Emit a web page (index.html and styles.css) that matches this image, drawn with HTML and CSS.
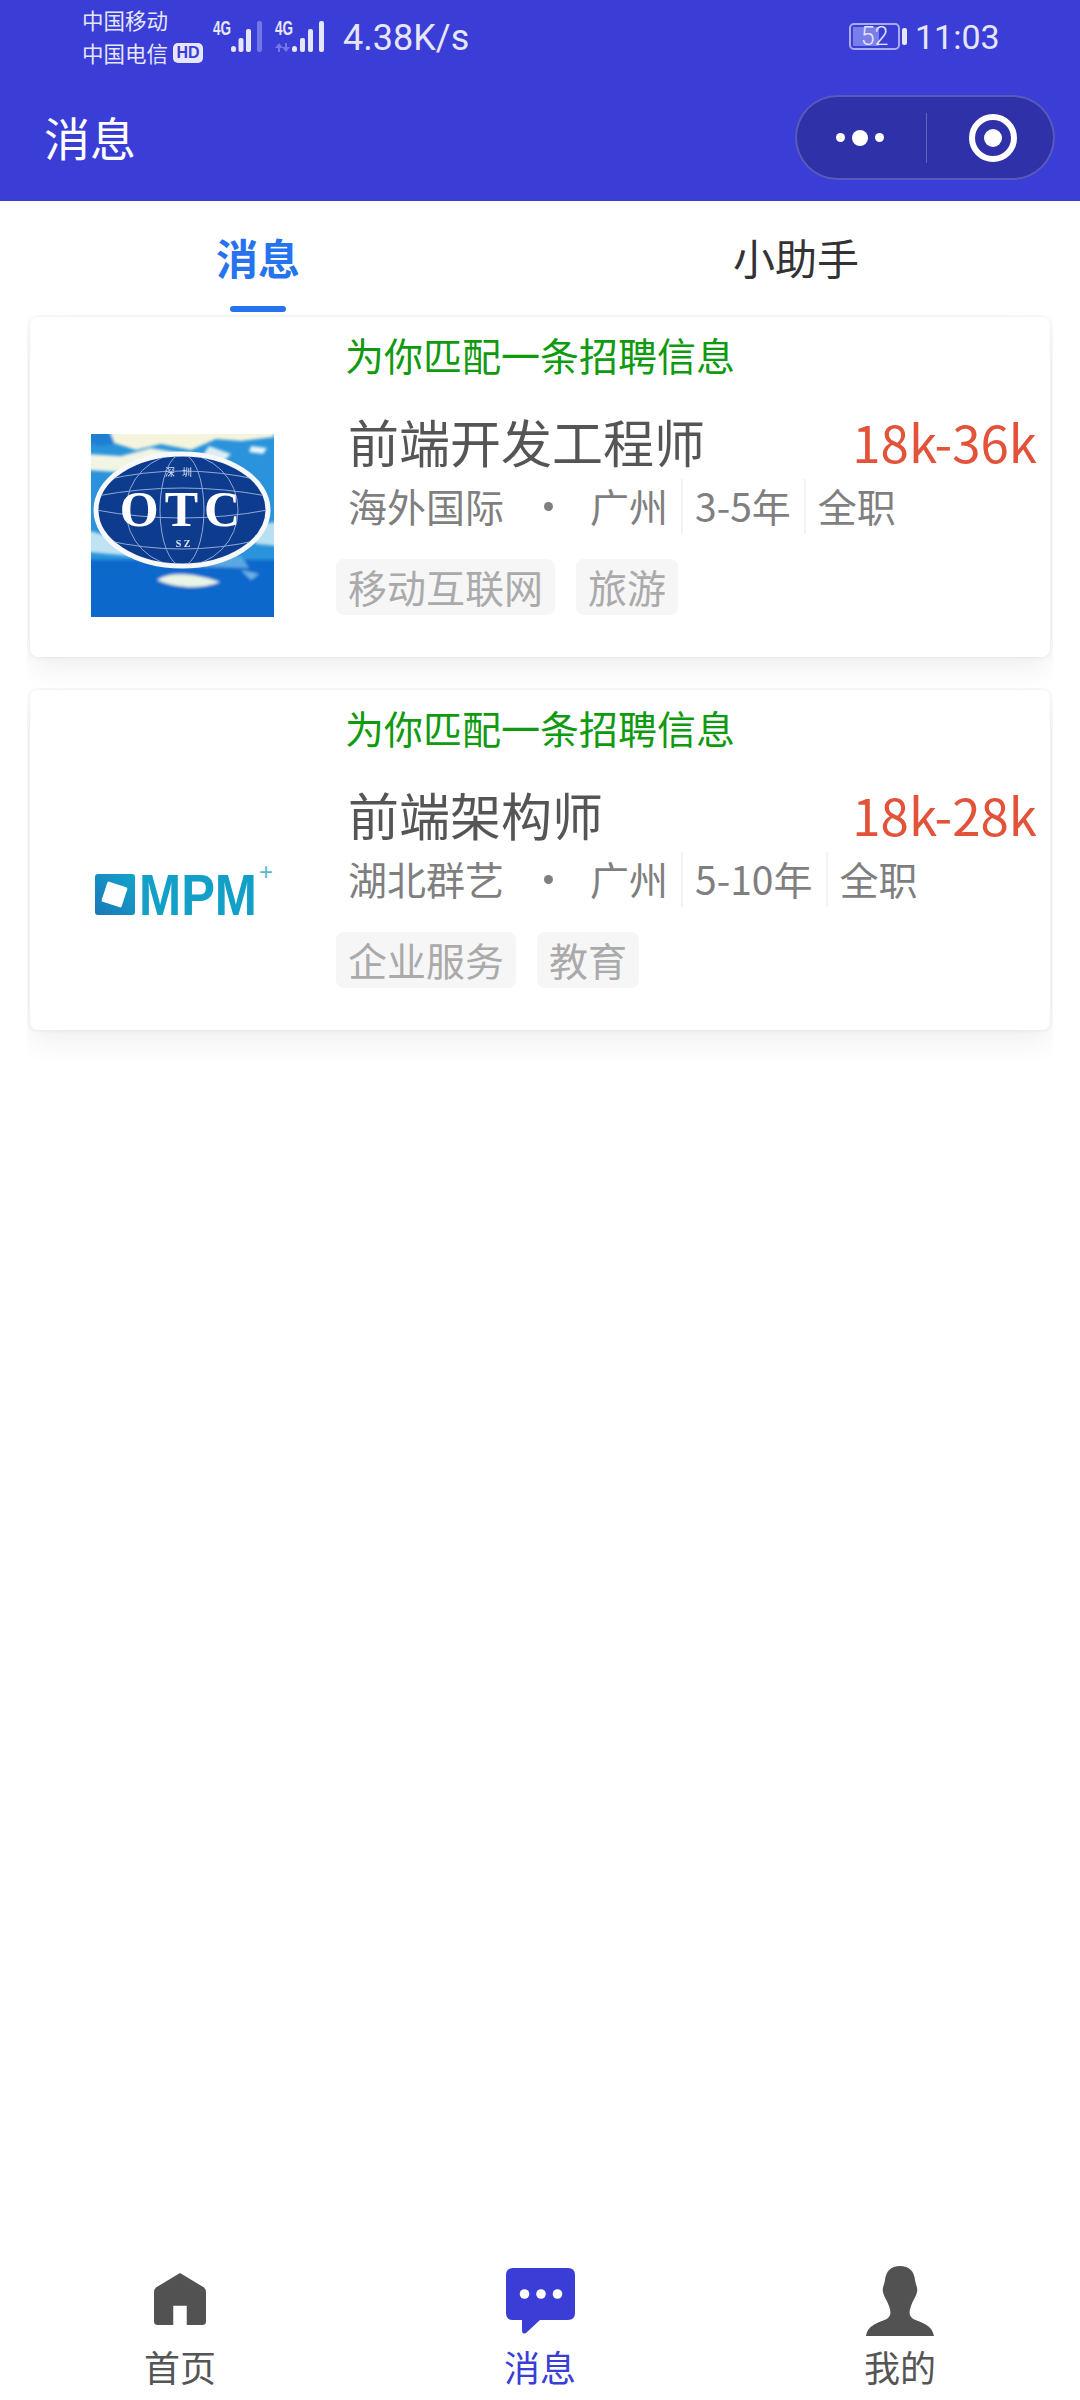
FILE: index.html
```html
<!DOCTYPE html>
<html lang="zh-CN">
<head>
    <meta charset="UTF-8">
    <meta name="viewport" content="width=device-width, initial-scale=1.0">
    <title>消息</title>
    <link rel="stylesheet" href="styles.css">
</head>
<body>
    <header class="header">
        <div class="status-bar">
            <div class="carrier">
                <div>中国移动</div>
                <div class="carrier-line">中国电信<span class="hd">HD</span></div>
            </div>
            <svg class="signal" width="50" height="46" viewBox="0 -10 50 46">
                <text class="signal-text" x="0" y="17" textLength="18" lengthAdjust="spacingAndGlyphs">4G</text>
                <rect class="bar" x="18" y="28" width="5" height="6" rx="2.5"/>
                <rect class="bar" x="25.500" y="20" width="5" height="14" rx="2"/>
                <rect class="bar" x="33" y="11" width="5" height="23" rx="2"/>
                <rect class="bar bar-off" x="44" y="3" width="5" height="31" rx="2"/>
            </svg>
            <svg class="signal signal-two" width="50" height="46" viewBox="0 -10 50 46">
                <text class="signal-text" x="0" y="17" textLength="18" lengthAdjust="spacingAndGlyphs">4G</text>
                <path class="bar-off" d="M4 25l-4 5h3v4h2v-4h3zM11 34l4-5h-3v-4h-2v4H7z"/>
                <rect class="bar" x="17" y="28" width="5" height="6" rx="2.500"/>
                <rect class="bar" x="25" y="20" width="5" height="14" rx="2"/>
                <rect class="bar" x="33" y="11" width="5" height="23" rx="2"/>
                <rect class="bar" x="44" y="3" width="5" height="31" rx="2"/>
            </svg>
            <span class="speed">4.38K/s</span>
            <div class="battery"><span class="battery-num">52</span></div>
            <span class="battery-nub"></span>
            <span class="time">11:03</span>
        </div>
        <div class="nav-bar">
            <span class="nav-title">消息</span>
            <div class="capsule">
                <div class="capsule-more">
                    <span class="dot"></span>
                    <span class="dot dot-big"></span>
                    <span class="dot"></span>
                </div>
                <div class="capsule-close">
                    <span class="target"></span>
                </div>
            </div>
        </div>
    </header>

    <nav class="tabs">
        <div class="tab tab-on">消息</div>
        <div class="tab">小助手</div>
    </nav>

    <section class="list">
        <div class="card-wrap">
            <div class="card">
                <div class="logo">
                    <svg width="183" height="183" viewBox="0 0 183 183">
                        <defs>
                            <filter id="soft"><feGaussianBlur stdDeviation="1.6"/></filter>
                            <filter id="softer"><feGaussianBlur stdDeviation="0.5"/></filter>
                            <clipPath id="globe"><ellipse cx="91" cy="76" rx="84" ry="54"/></clipPath>
                        </defs>
                        <rect width="183" height="183" fill="#2a93dc"/>
                        <g filter="url(#soft)">
                            <path fill="#f4f5dc" d="M20-4H183V3L150 7 125 5 100 16 70 10 45 16 20 8z"/>
                            <path fill="#f2f4e4" d="M-4 20L30 22 60 14 95 20 60 30 25 38-4 36z"/>
                            <path fill="#1c7fd2" d="M-4-4H18L24 10 8 12-4 8z"/>
                            <path fill="#dfeef2" d="M118 12L140 20 132 28 110 24z"/>
                            <path fill="#e9f6f8" d="M160 12L176 14 172 20 158 18z"/>
                            <path fill="#bfe3f2" d="M-4 96L30 106 40 122-4 118z"/>
                            <path fill="#e6f3f0" d="M40 116L140 124 130 134 60 130z"/>
                            <path fill="#b9e0f0" d="M150 92L186 88V112L165 110z"/>
                            <rect x="-4" y="126" width="191" height="62" fill="#0d68cc"/>
                            <path fill="#5aa8e2" d="M60 122L150 122 158 134 90 132z"/>
                            <path fill="#e9f5e6" d="M66 146C78 138 100 138 129 148 110 156 84 154 66 146z"/>
                            <path fill="#6ab4e6" d="M150 136L168 140 160 146z"/>
                        </g>
                        <g filter="url(#softer)">
                            <ellipse cx="91" cy="76" rx="86" ry="56" fill="#0f3b8e" stroke="#f6f8fa" stroke-width="5"/>
                            <g clip-path="url(#globe)" fill="none" stroke="#8ea8d6" stroke-width="1">
                                <ellipse cx="91" cy="76" rx="22" ry="56"/>
                                <ellipse cx="91" cy="76" rx="56" ry="56"/>
                                <path d="M5 76Q91 92 177 76"/>
                                <path d="M14 46Q91 28 168 46"/>
                                <path d="M14 106Q91 124 168 106"/>
                                <path d="M6 62Q91 46 176 62"/>
                            </g>
                            <text class="otc-cn" x="91" y="42" text-anchor="middle">深圳</text>
                            <text class="otc-main" x="92" y="92" text-anchor="middle">OTC</text>
                            <text class="otc-sz" x="92" y="113" text-anchor="middle">S Z</text>
                        </g>
                    </svg>
                </div>
                <div class="info">
                    <div class="match">为你匹配一条招聘信息</div>
                    <div class="job-row">
                        <span class="job-name">前端开发工程师</span>
                        <span class="salary">18k-36k</span>
                    </div>
                    <div class="meta">
                        <span class="company">海外国际</span>
                        <span class="sep-dot"></span>
                        <span class="meta-item">广州</span>
                        <span class="meta-item">3-5年</span>
                        <span class="meta-item meta-last">全职</span>
                    </div>
                    <div class="tags">
                        <span class="tag">移动互联网</span>
                        <span class="tag">旅游</span>
                    </div>
                </div>
            </div>
        </div>

        <div class="card-wrap">
            <div class="card">
                <div class="logo">
                    <svg width="183" height="183" viewBox="0 0 183 183">
                        <defs>
                            <linearGradient id="mpmBox" x1="0" y1="1" x2="1" y2="0">
                                <stop offset="0" stop-color="#1a78b8"/>
                                <stop offset="1" stop-color="#12a4cc"/>
                            </linearGradient>
                        </defs>
                        <rect x="4" y="67" width="40" height="41" rx="3" fill="url(#mpmBox)"/>
                        <rect x="13" y="77" width="21" height="21" rx="1.500" fill="#fff" transform="rotate(18 23.500 87.500)"/>
                        <text class="mpm-text" x="48" y="108" textLength="118" lengthAdjust="spacingAndGlyphs">MPM</text>
                        <text class="mpm-plus" x="175" y="73" text-anchor="middle">+</text>
                    </svg>
                </div>
                <div class="info">
                    <div class="match">为你匹配一条招聘信息</div>
                    <div class="job-row">
                        <span class="job-name">前端架构师</span>
                        <span class="salary">18k-28k</span>
                    </div>
                    <div class="meta">
                        <span class="company">湖北群艺</span>
                        <span class="sep-dot"></span>
                        <span class="meta-item">广州</span>
                        <span class="meta-item">5-10年</span>
                        <span class="meta-item meta-last">全职</span>
                    </div>
                    <div class="tags">
                        <span class="tag">企业服务</span>
                        <span class="tag">教育</span>
                    </div>
                </div>
            </div>
        </div>
    </section>

    <footer class="tabbar">
        <div class="tabbar-item">
            <div class="tabbar-icon">
                <svg class="icon-home" width="52" height="54" viewBox="0 0 54 54">
                    <path fill="#525252" d="M27 0L52 15Q54 17 54 20V50Q54 54 50 54H34V34H20V54H4Q0 54 0 50V20Q0 17 2 15Z"/>
                </svg>
            </div>
            <span class="tabbar-label">首页</span>
        </div>
        <div class="tabbar-item tabbar-on">
            <div class="tabbar-icon">
                <svg width="69" height="66" viewBox="0 0 69 66">
                    <path fill="#3a3dd6" d="M7 0H62Q69 0 69 7V45Q69 52 62 52H34L20 65Q16 67 16 62V52H7Q0 52 0 45V7Q0 0 7 0Z"/>
                    <circle cx="18.500" cy="26" r="4.800" fill="#fff"/>
                    <circle cx="35" cy="26" r="4.800" fill="#fff"/>
                    <circle cx="51.500" cy="26" r="4.800" fill="#fff"/>
                </svg>
            </div>
            <span class="tabbar-label">消息</span>
        </div>
        <div class="tabbar-item">
            <div class="tabbar-icon">
                <svg width="68" height="70" viewBox="0 0 68 70">
                    <path fill="#525252" d="M34 0C25 0 20 5 19 14C18 20 16 22 17 26C18 31 21 34 23 40C25 46 25 49 22 52C17 56 2 57 0 70H68C66 57 51 56 46 52C43 49 43 46 45 40C47 34 50 31 51 26C52 22 50 20 49 14C48 5 43 0 34 0Z"/>
                </svg>
            </div>
            <span class="tabbar-label">我的</span>
        </div>
    </footer>
</body>
</html>
```

FILE: styles.css
```css
* {
    box-sizing: border-box;
}
body {
    margin: 0;
    min-height: 2400px;
    display: flex;
    flex-direction: column;
    background-color: #fff;
    font-family: "Noto Sans CJK SC", "Noto Sans", sans-serif;
}

/* header */
.header {
    height: 201px;
    background-color: #3a3dd6;
    color: #fff;
}
.status-bar {
    height: 74px;
    padding-left: 82px;
    display: flex;
    align-items: flex-start;
    color: #e6e6fa;
}
.carrier {
    width: 131px;
    padding-top: 3px;
    font-size: 21.500px;
    line-height: 33px;
}
.carrier-line {
    display: flex;
    align-items: center;
}
.hd {
    width: 30px;
    height: 20px;
    margin-left: 5px;
    border-radius: 5px;
    background-color: #e6e6fa;
    color: #3a3dd6;
    font-family: "Liberation Sans", sans-serif;
    font-size: 16px;
    font-weight: bold;
    line-height: 20px;
    text-align: center;
}
.signal {
    margin-top: 8px;
    flex-shrink: 0;
}
.signal-two {
    margin-left: 12px;
}
.signal-text {
    fill: #e6e6fa;
    font-family: "Liberation Sans", sans-serif;
    font-size: 21px;
    font-weight: bold;
}
.bar {
    fill: #e6e6fa;
}
.bar-off {
    fill: #7377e6;
}
.speed {
    margin-left: 18px;
    margin-top: 18px;
    width: 506px;
    font-family: Roboto, sans-serif;
    font-size: 36px;
    line-height: 40px;
}
.battery {
    position: relative;
    width: 51px;
    height: 27px;
    margin-top: 23px;
    border: 2px solid #a9abee;
    border-radius: 5px;
    display: flex;
    align-items: center;
    justify-content: center;
}
.battery::before {
    content: "";
    position: absolute;
    left: 2px;
    top: 2px;
    bottom: 2px;
    width: 26px;
    background-color: #7a7ee8;
}
.battery-num {
    position: relative;
    font-family: Roboto, sans-serif;
    font-size: 25px;
    font-weight: 300;
    line-height: 23px;
}
.battery-nub {
    width: 5px;
    height: 17px;
    margin: 28px 8px 0 2px;
    border-radius: 2px;
    background-color: #e6e6fa;
}
.time {
    font-family: Roboto, sans-serif;
    font-size: 34px;
    line-height: 40px;
    margin-top: 17px;
}
.nav-bar {
    height: 127px;
    padding: 0 25px 0 44px;
    display: flex;
    align-items: center;
    justify-content: space-between;
}
.nav-title {
    font-size: 46px;
    line-height: 60px;
    margin-top: -3px;
}
.capsule {
    width: 260px;
    height: 85px;
    border: 2px solid rgba(255, 255, 255, 0.2);
    border-radius: 43px;
    background-color: #2f31a8;
    display: flex;
    align-items: center;
}
.capsule-more {
    width: 130px;
    height: 50px;
    padding-right: 4px;
    border-right: 1px solid rgba(255, 255, 255, 0.25);
    display: flex;
    align-items: center;
    justify-content: center;
    gap: 7px;
}
.dot {
    width: 9px;
    height: 9px;
    border-radius: 50%;
    background-color: #fff;
}
.dot-big {
    width: 16px;
    height: 16px;
}
.capsule-close {
    flex: 1;
    display: flex;
    justify-content: center;
    padding-left: 5px;
}
.target {
    width: 48px;
    height: 48px;
    border: 6px solid #fff;
    border-radius: 50%;
    display: flex;
    align-items: center;
    justify-content: center;
}
.target::after {
    content: "";
    width: 18px;
    height: 18px;
    border-radius: 50%;
    background-color: #fff;
}

/* tabs */
.tabs {
    height: 114px;
    display: grid;
    grid-template-columns: 516px 560px;
}
.tab {
    position: relative;
    padding-top: 31px;
    font-size: 42px;
    line-height: 50px;
    text-align: center;
    color: #333;
}
.tab-on {
    color: #2673f0;
    font-weight: bold;
}
.tab-on::after {
    content: "";
    position: absolute;
    left: 230px;
    top: 105px;
    width: 56px;
    height: 6px;
    border-radius: 3px;
    background-color: #2673f0;
}

/* cards */
.list {
    margin-left: 27px;
    width: 1026px;
}
.card-wrap {
    height: 373px;
    padding: 2px 3px 0;
    overflow: hidden;
}
.card {
    height: 340px;
    border-radius: 8px;
    background-color: #fff;
    box-shadow: 0 0 4px rgba(0, 0, 0, 0.08), 0 10px 30px rgba(0, 0, 0, 0.07);
    display: flex;
}
.logo {
    width: 183px;
    height: 183px;
    margin: 117px 0 0 61px;
    flex-shrink: 0;
}
.otc-cn {
    fill: #d8e0f0;
    font-family: "Noto Sans CJK SC", sans-serif;
    font-size: 10px;
    letter-spacing: 7px;
}
.otc-main {
    fill: #fff;
    font-family: "Liberation Serif", serif;
    font-size: 50px;
    font-weight: bold;
    letter-spacing: 6px;
}
.otc-sz {
    fill: #e4e8f4;
    font-family: "Liberation Serif", serif;
    font-size: 10px;
    font-weight: bold;
}
.mpm-text {
    fill: #12a0c8;
    font-family: "Liberation Sans", sans-serif;
    font-size: 57px;
    font-weight: bold;
}
.mpm-plus {
    fill: #5cb8cc;
    font-family: "Liberation Sans", sans-serif;
    font-size: 24px;
}
.info {
    flex: 1;
    min-width: 0;
    margin-left: 74px;
    padding: 15px 13px 0 0;
}
.match {
    margin-left: -3px;
    font-size: 39px;
    line-height: 44px;
    color: #0f9a10;
}
.job-row {
    height: 60px;
    margin-top: 35px;
    display: flex;
    justify-content: space-between;
    align-items: center;
}
.job-name {
    font-size: 51px;
    color: #555;
}
.salary {
    font-size: 51px;
    color: #e2533a;
}
.meta {
    height: 55px;
    margin-top: 8px;
    display: flex;
    align-items: center;
    font-size: 39px;
    color: #7f7f7f;
}
.company {
    height: 55px;
    line-height: 53px;
}
.sep-dot {
    width: 9px;
    height: 9px;
    margin: 0 25px 0 40px;
    border-radius: 50%;
    background-color: #7f7f7f;
}
.meta-item {
    height: 55px;
    padding: 0 13px 0 12px;
    border-right: 2px solid #f3f3f3;
    line-height: 53px;
}
.meta-last {
    border-right: 0;
}
.tags {
    margin: 25px 0 0 -12px;
    display: flex;
    gap: 21px;
}
.tag {
    height: 56px;
    padding: 0 12px;
    border-radius: 8px;
    background-color: #f6f6f6;
    font-size: 39px;
    line-height: 54px;
    color: #aaa;
}

/* bottom bar */
.tabbar {
    margin-top: auto;
    padding-bottom: 12px;
    display: grid;
    grid-template-columns: 1fr 1fr 1fr;
}
.tabbar-item {
    display: flex;
    flex-direction: column;
    align-items: center;
    color: #555;
}
.tabbar-on {
    color: #3a3dd6;
}
.tabbar-icon {
    height: 70px;
    display: flex;
    align-items: center;
}
.icon-home {
    margin-top: -5px;
}
.tabbar-label {
    margin-top: 8px;
    font-size: 36px;
    line-height: 44px;
}
```
